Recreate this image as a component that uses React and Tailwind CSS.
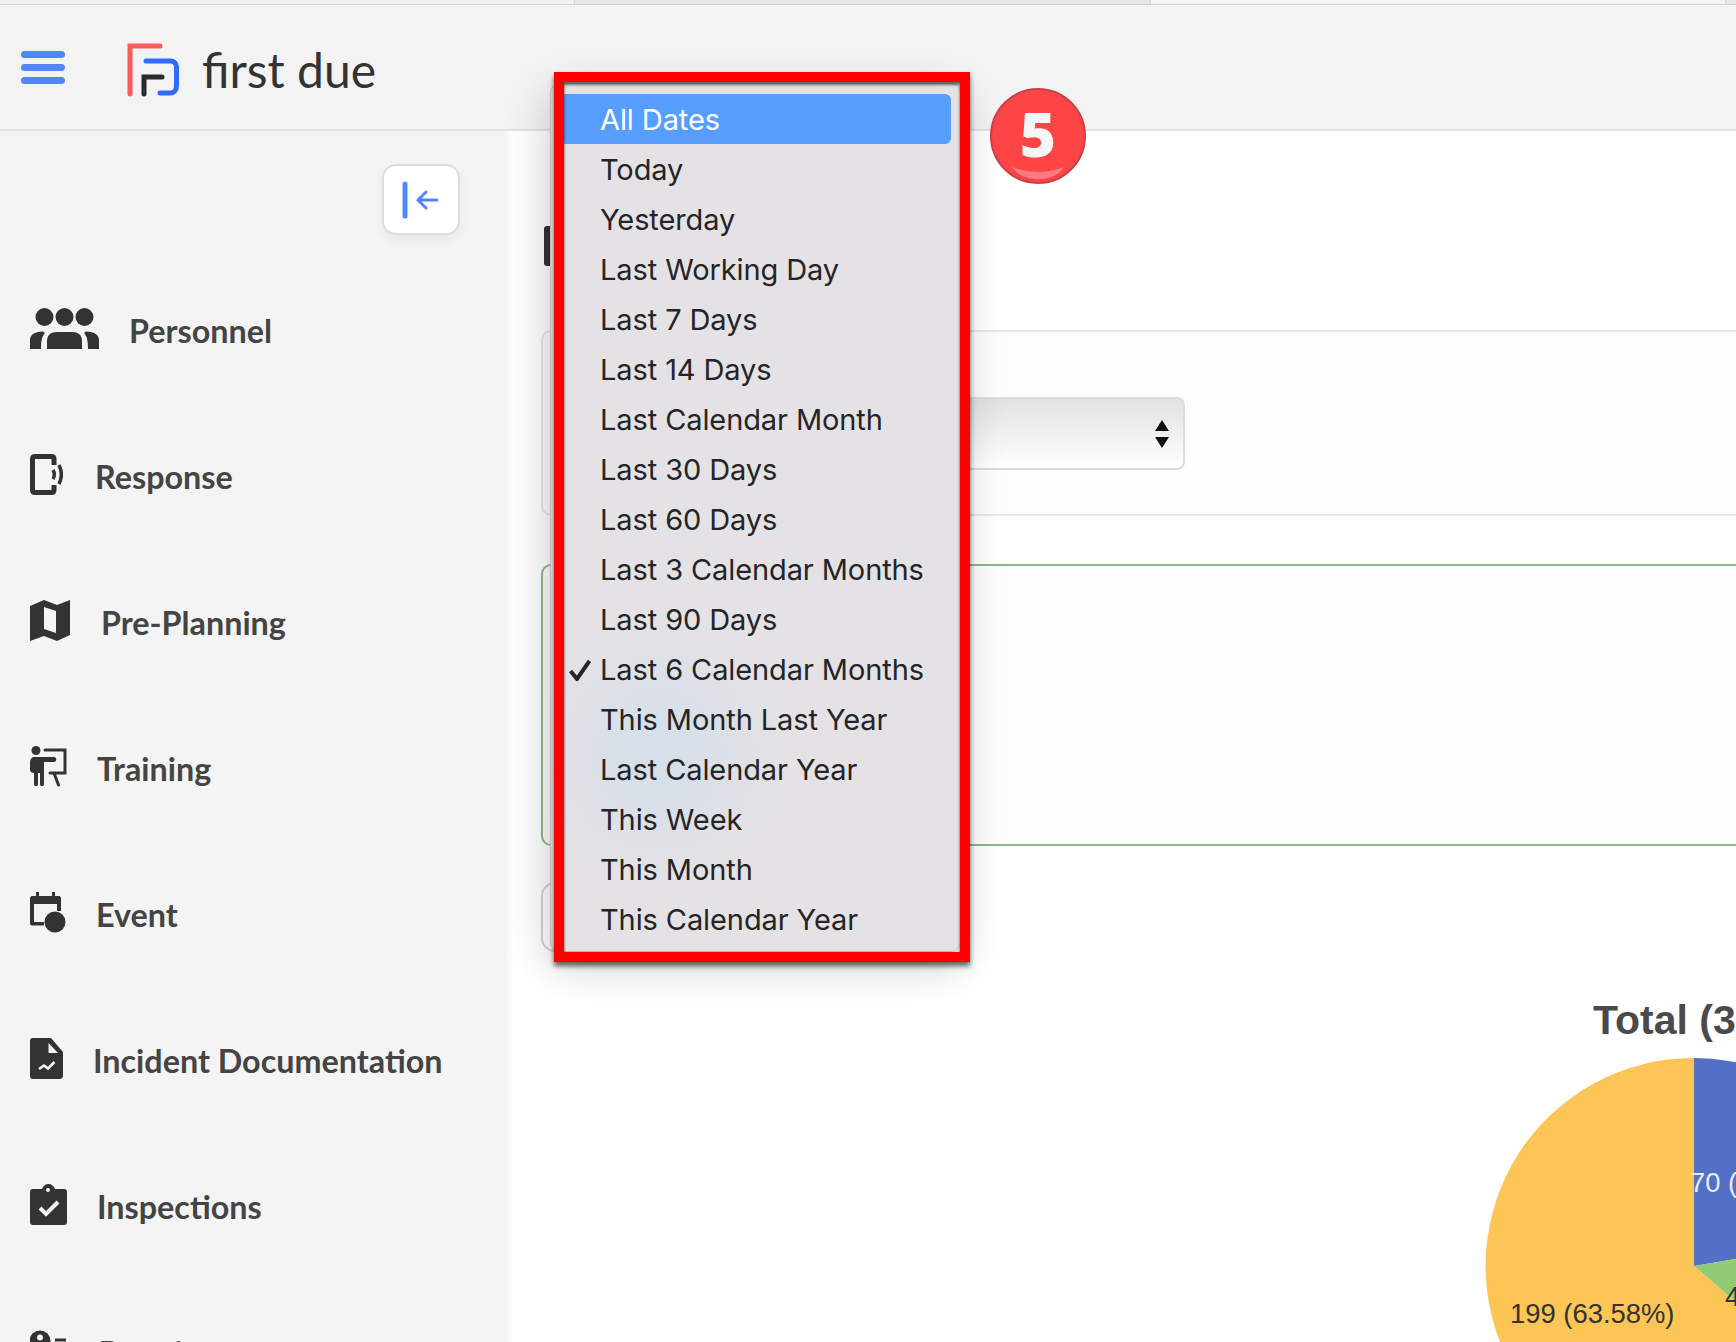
const dates = [
  'All Dates',
  'Today',
  'Yesterday',
  'Last Working Day',
  'Last 7 Days',
  'Last 14 Days',
  'Last Calendar Month',
  'Last 30 Days',
  'Last 60 Days',
  'Last 3 Calendar Months',
  'Last 90 Days',
  'Last 6 Calendar Months',
  'This Month Last Year',
  'Last Calendar Year',
  'This Week',
  'This Month',
  'This Calendar Year'
];

const PersonnelIcon = () => (
  <svg width="69" height="41" viewBox="0 0 69 41" fill="#333">
    <circle cx="14.5" cy="9" r="9" />
    <circle cx="34.5" cy="9" r="9" />
    <circle cx="54.5" cy="9" r="9" />
    <path d="M17 41V33C17 27 21 24 27 24H42C48 24 52 27 52 33V41Z" />
    <path d="M0 41V32C0 27 4 24 13 23.5L15 25C12 28 11 33 11 41Z" />
    <path d="M69 41V32C69 27 65 24 56 23.5L54 25C57 28 58 33 58 41Z" />
  </svg>
);

const ResponseIcon = () => (
  <svg width="33" height="41" viewBox="0 0 33 41" fill="none" stroke="#333">
    <path d="M24 11V5C24 3.5 23 2.5 21.5 2.5H5C3.5 2.5 2.5 3.5 2.5 5V36C2.5 37.5 3.5 38.5 5 38.5H21.5C23 38.5 24 37.5 24 36V31" strokeWidth="5" />
    <path d="M23 16C24.5 18.5 24.5 22.5 23 25" strokeWidth="3.5" />
    <path d="M29 11C32 17 32 24 29 30" strokeWidth="3.5" />
  </svg>
);

const MapIcon = () => (
  <svg width="40" height="41" viewBox="0 0 40 41" fill="#333">
    <path
      fillRule="evenodd"
      d="M0 6L14 0L27 5L40 0V35L27 41L14 36L0 41ZM14 7V29L26 33V11Z"
    />
  </svg>
);

const TrainingIcon = () => (
  <svg width="37" height="41" viewBox="0 0 37 41" fill="#333">
    <circle cx="6" cy="4.5" r="4.5" />
    <path d="M0 16C0 13 2 11 4 11H24C27 11 27 16 24 16H14V38C14 41 10 41 10 38V27H8V38C8 41 4 41 4 38V27C2 27 0 26 0 24Z" />
    <path d="M15 4H35V27H20M24 27L28.5 39" fill="none" stroke="#333" strokeWidth="3" strokeLinecap="round" />
  </svg>
);

const EventIcon = () => (
  <svg width="36" height="41" viewBox="0 0 36 41" fill="#333">
    <path d="M6 0H9V4H22V0H25V4H29C30 4 31 5 31 6V19H27V12H4V30H14V33.5H2C1 33.5 0 32.5 0 31.5V6C0 5 1 4 2 4H6Z" />
    <circle cx="25" cy="30" r="10.5" />
  </svg>
);

const IncidentIcon = () => (
  <svg width="33" height="41" viewBox="0 0 33 41">
    <path d="M3 0H21L33 14V38C33 40 31 41 30 41H3C1 41 0 40 0 38V3C0 1 1 0 3 0Z" fill="#333" />
    <path d="M18.5 5V15H28Z" fill="#f4f4f4" />
    <path d="M9 31L14 27.5L18 30.5L24.5 24" fill="none" stroke="#f4f4f4" strokeWidth="2.5" />
  </svg>
);

const InspectionIcon = () => (
  <svg width="37" height="41" viewBox="0 0 37 41">
    <path d="M3 5H12C13 2 15.5 0 18.5 0C21.5 0 24 2 25 5H34C36 5 37 6 37 8V38C37 40 36 41 34 41H3C1 41 0 40 0 38V8C0 6 1 5 3 5Z" fill="#333" />
    <circle cx="18" cy="6" r="2" fill="#f4f4f4" />
    <path d="M10 24L16 30L28 18" fill="none" stroke="#f4f4f4" strokeWidth="4" />
  </svg>
);

const PermitIcon = () => (
  <svg width="37" height="41" viewBox="0 0 37 41">
    <circle cx="10" cy="11" r="10.5" fill="#333" />
    <circle cx="10" cy="7.5" r="3" fill="#f4f4f4" />
    <path d="M25 10H36" stroke="#333" strokeWidth="3" />
  </svg>
);

// icon column width is what puts each label at its own x
const navItems = [
  { label: 'Personnel', icon: PersonnelIcon, width: 'w-[99px]' },
  { label: 'Response', icon: ResponseIcon, width: 'w-[65px]' },
  { label: 'Pre-Planning', icon: MapIcon, width: 'w-[71px]' },
  { label: 'Training', icon: TrainingIcon, width: 'w-[67px]' },
  { label: 'Event', icon: EventIcon, width: 'w-[66px]' },
  { label: 'Incident Documentation', icon: IncidentIcon, width: 'w-[63px]' },
  { label: 'Inspections', icon: InspectionIcon, width: 'w-[67px]' },
  { label: 'Permits', icon: PermitIcon, width: 'w-[69px]' }
];

const Sidebar = () => (
  <aside className="w-[507px] shrink-0 bg-[#f4f4f4] font-['Lato',sans-serif]">
    <div className="flex justify-end pt-[33px] pr-[47px]">
      <button className="flex h-[71px] w-[78px] items-center justify-center rounded-[14px] border-2 border-[#dedede] bg-white shadow-[0_6px_12px_rgba(0,0,0,0.05)]">
        <svg width="38" height="38" viewBox="0 0 38 38" fill="none" stroke="#5286ff" strokeLinecap="round">
          <path d="M3 3V35" strokeWidth="5" />
          <path d="M35 19H16M24 11L16 19L24 27" strokeWidth="3" />
        </svg>
      </button>
    </div>
    <nav className="mt-[20px]">
      {navItems.map(item => {
        const Icon = item.icon;
        return (
          <div key={item.label} className="flex h-[146px] items-center pl-[30px]">
            <span className={`flex ${item.width} shrink-0`}>
              <Icon />
            </span>
            <span className="whitespace-nowrap pt-[6px] text-[32.3px] font-bold leading-[40px] text-[#444]">
              {item.label}
            </span>
          </div>
        );
      })}
    </nav>
  </aside>
);

const DateMenu = () => (
  <div className="absolute left-[550px] top-[83px] z-10 h-[869px] w-[411px] rounded-[10px] border border-[#c8c8c8] bg-[#e4e2e5] bg-[radial-gradient(circle_at_108px_670px,#d7dfe8_0,#d7dfe8_30px,transparent_130px)] pt-[10px] font-['Inter',sans-serif] shadow-[0_12px_44px_rgba(0,0,0,0.22)]">
    {dates.map((date, index) => (
      <div
        key={date}
        className={`mx-[9px] flex h-[50px] items-center rounded-[6px] pl-[9px] pt-[1px] text-[29px] tracking-[-0.1px] ${index === 0 ? 'bg-[#569eff] text-white' : 'text-[#252427]'}`}
      >
        <span className="flex w-[31px] shrink-0">
          {date === 'Last 6 Calendar Months' && (
            <svg width="22" height="22" viewBox="0 0 22 22" fill="none" stroke="#252427" strokeWidth="4">
              <path d="M1.5 12L8 20L20.5 2" />
            </svg>
          )}
        </span>
        {date}
      </div>
    ))}
  </div>
);

const PieChart = () => (
  <div className="ml-[945px] flex w-[416px] shrink-0 flex-col items-center">
    <h2 className="whitespace-nowrap font-['Liberation_Sans',sans-serif] text-[41px] font-bold leading-[46px] text-[#4a4a4a]">
      Total (313)
    </h2>
    <svg width="416" height="416" viewBox="0 0 416 416" className="mt-[15px] overflow-visible font-['Liberation_Sans',sans-serif] text-[27.4px]">
      <path d="M208 208L208 0A208 208 0 0 1 413 174Z" fill="#5470c6" />
      <path d="M208 208L413 174A208 208 0 0 1 365 344Z" fill="#91cc75" />
      <path d="M208 208L365 344A208 208 0 1 1 208 0Z" fill="#fcc556" />
      <text x="204" y="134" fill="#e8ecf8">70 (22.36%)</text>
      <text x="239" y="248" fill="#333">44 (14.06%)</text>
      <text x="24" y="265" fill="#333">199 (63.58%)</text>
    </svg>
  </div>
);

const App = () => {
  return (
    <div className="relative flex h-[1342px] w-full flex-col overflow-hidden bg-white">
      <div className="flex h-[5px] shrink-0 border-b border-[#d4d4d4]">
        <div className="w-[575px] border-r border-[#d4d4d4] bg-[#f1f1f1]" />
        <div className="w-[576px] border-r border-[#d4d4d4] bg-[#e5e5e5]" />
        <div className="w-[575px] border-r border-[#d4d4d4] bg-[#f3f3f3]" />
        <div className="flex-1 bg-[#e5e5e5]" />
      </div>

      <header className="flex h-[126px] shrink-0 items-center border-b-2 border-[#e4e4e4] bg-[#f3f3f3] pl-[21px]">
        <div className="flex w-[44px] flex-col gap-[6px]">
          <span className="h-[7px] rounded-full bg-[#5286ff]" />
          <span className="h-[7px] rounded-full bg-[#5286ff]" />
          <span className="h-[7px] rounded-full bg-[#5286ff]" />
        </div>
        <svg width="54" height="54" viewBox="0 0 54 54" fill="none" strokeWidth="5" strokeLinecap="round" className="ml-[62px] mt-[6px]">
          <path d="M3 51V3H33" stroke="#ff5a5a" />
          <path d="M19 18H43C47 18 49.5 20.5 49.5 24V43C49.5 47 47 50 43 50H33" stroke="#2f6bff" />
          <path d="M17 51V34H35" stroke="#2b2b2b" />
        </svg>
        <span className="ml-[21px] mt-[5px] font-['Lato',sans-serif] text-[48px] font-normal leading-none tracking-normal text-[#333]">first due</span>
      </header>

      <div className="flex min-h-0 flex-1">
        <Sidebar />
        <main className="min-w-0 flex-1 pl-[34px] shadow-[inset_8px_0_8px_-8px_rgba(0,0,0,0.06)]">
          <div className="ml-[3px] mt-[95px] h-[40px] w-[10px] rounded-[3px] bg-[#333]" />

          <section className="mt-[64px] h-[186px] rounded-l-[10px] border-y-2 border-l-2 border-[#e6e6e6] bg-[#fdfdfd] pr-[551px] pt-[65px]">
            <div className="ml-[160px] flex h-[73px] items-center justify-end rounded-[8px] border-2 border-[#dcdcdc] bg-gradient-to-b from-[#e2e2e2] to-white pr-[14px]">
              <svg width="14" height="28" viewBox="0 0 14 28" fill="#111">
                <path d="M7 0L14 11H0Z" />
                <path d="M7 28L14 17H0Z" />
              </svg>
            </div>
          </section>

          <section className="mt-[48px] h-[282px] rounded-l-[10px] border-y-2 border-l-2 border-[#8ab98a] bg-[#fdfdfd]" />

          <div className="mt-[36px] h-[70px] w-[200px] rounded-[14px] border-2 border-[#d4d4d4]" />

          <div className="mt-[45px]">
            <PieChart />
          </div>
        </main>
      </div>

      <DateMenu />

      <div className="absolute left-[554px] top-[72px] z-20 h-[890px] w-[416px] border-[10px] border-[#ff0000] shadow-[0_4px_5px_rgba(0,0,0,0.6),inset_0_3px_3px_rgba(0,0,0,0.55),inset_0_0_2px_rgba(0,0,0,0.3)]" />

      <div className="absolute left-[990px] top-[88px] z-20 flex h-[96px] w-[96px] items-center justify-center overflow-hidden rounded-full border-2 border-[#c9404a] bg-[#fd4546]">
        <span className="-mt-[6px] font-['Open_Sans',sans-serif] text-[62px] font-extrabold leading-none text-[#f6f6f6]">5</span>
        <svg width="52" height="12" viewBox="0 0 52 12" className="absolute bottom-[3px] left-[20px]">
          <path d="M0 0Q26 10 52 0Q44 12 26 12Q8 12 0 0Z" fill="#ff7b81" />
        </svg>
      </div>
    </div>
  );
};

export default App;
